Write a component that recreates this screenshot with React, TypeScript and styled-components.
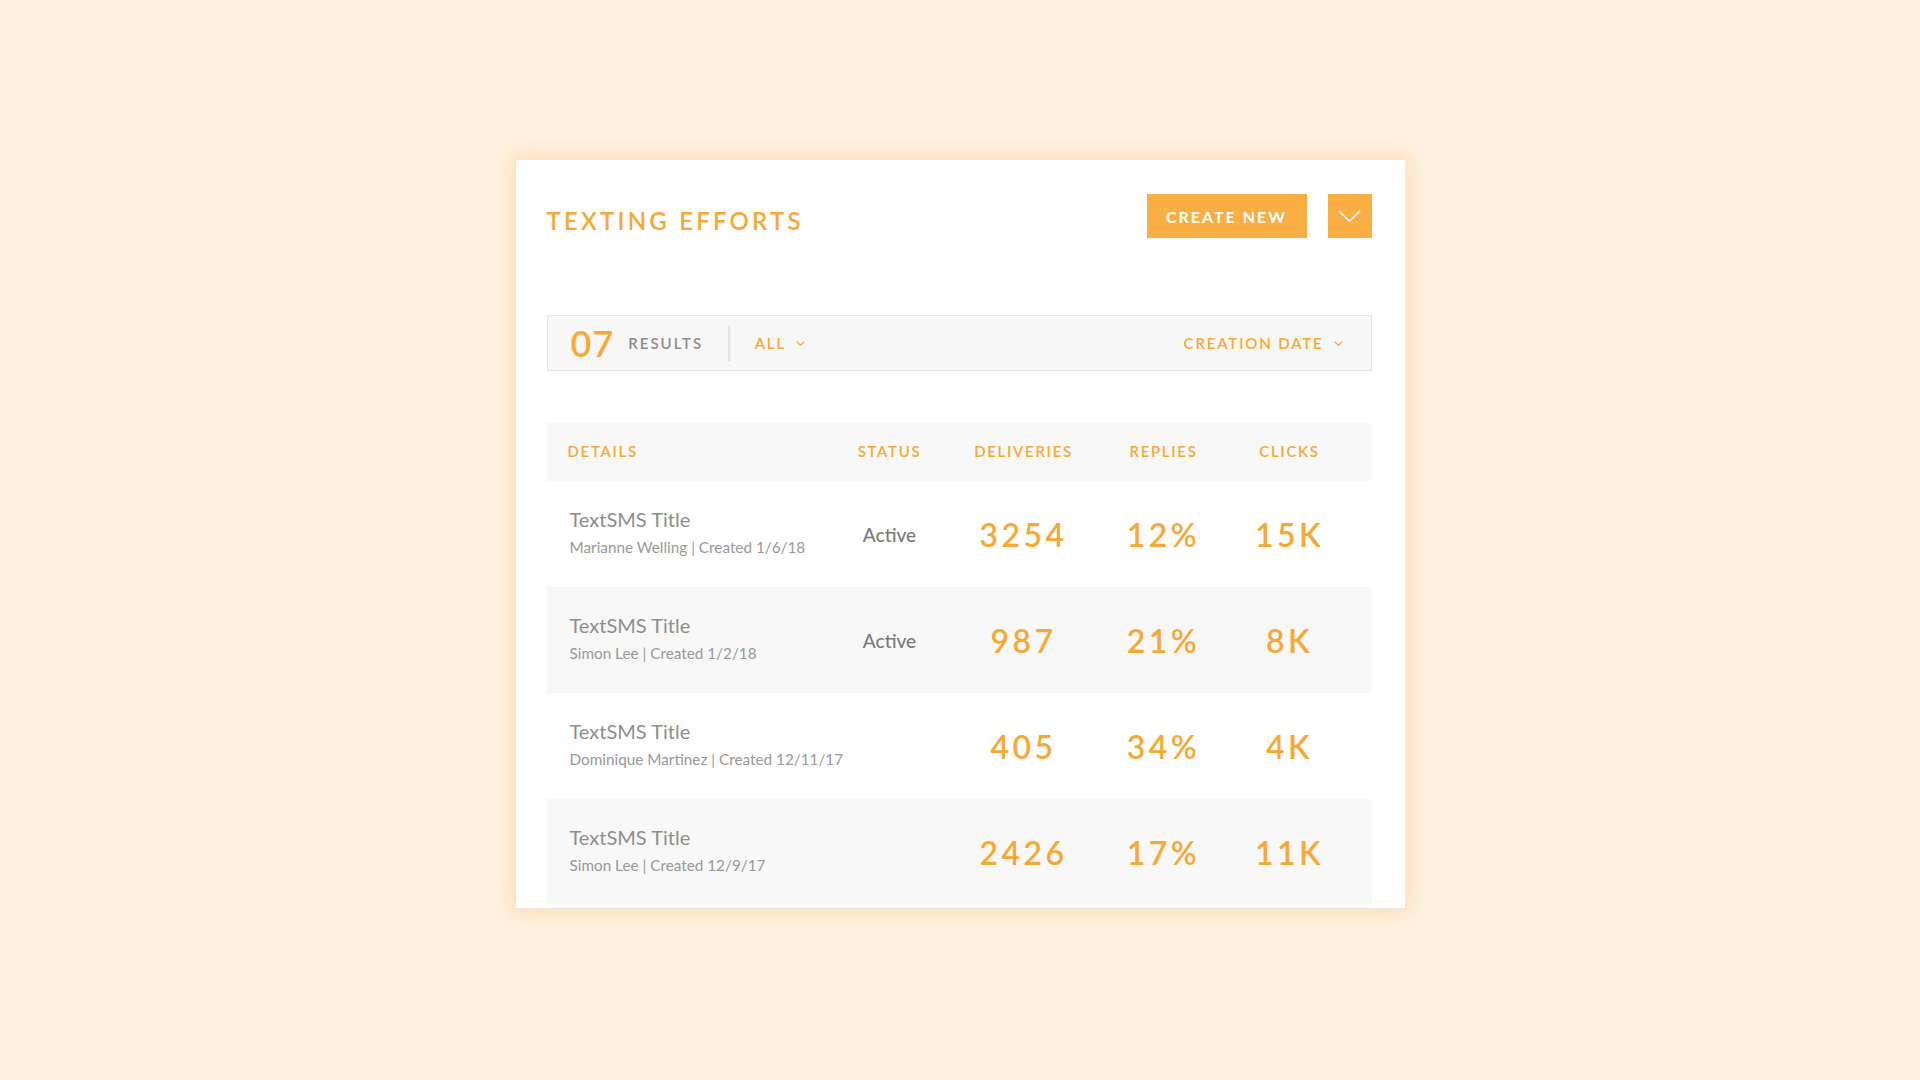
import styled, { createGlobalStyle } from 'styled-components';

const GlobalStyle = createGlobalStyle`
    html, body {
        margin: 0;
        padding: 0;
        background: #fff2e2;
        font-family: 'Lato', 'Noto Sans', sans-serif;
    }
`

const orange = '#f8a835';
const cols = '294px 98px 170px 110px 142px';

const Page = styled.div`
    min-height: 1080px;
    display: flex;
    justify-content: center;
    align-items: flex-start;
    padding-top: 159px;
    box-sizing: border-box;
`

const Card = styled.div`
    width: 891px;
    box-sizing: border-box;
    background: #fff;
    border: 1px solid #ebe6df;
    box-shadow: 0 0 18px 5px rgba(252, 205, 140, 0.5);
    padding: 34px 33px 3px 31px;
`

const Header = styled.div`
    display: flex;
    align-items: center;
    justify-content: space-between;
    height: 44px;
`

const Title = styled.h1`
    margin: 10px 0 0;
    font-size: 24px;
    font-weight: 600;
    letter-spacing: 3.2px;
    color: ${orange};
    line-height: 1;
`

const Actions = styled.div`
    display: flex;
    gap: 21px;
`

const Button = styled.button<{ $square?: boolean }>`
    height: 44px;
    width: ${p => p.$square ? '44px' : '160px'};
    border: none;
    background: #faae44;
    color: #fff;
    font-family: inherit;
    font-size: 16px;
    font-weight: 700;
    letter-spacing: 2px;
    display: flex;
    align-items: center;
    justify-content: center;
    padding: 0;
    cursor: pointer;
`

const FilterBar = styled.div`
    margin-top: 77px;
    height: 56px;
    box-sizing: border-box;
    border: 1.5px solid #e4e4e4;
    background: #f7f7f7;
    display: flex;
    align-items: center;
    padding: 0 28px 0 23px;
`

const Count = styled.span`
    font-size: 36px;
    font-weight: 600;
    color: ${orange};
    letter-spacing: 1px;
    line-height: 1;
`

const BarLabel = styled.span<{ $accent?: boolean }>`
    font-size: 15px;
    font-weight: 600;
    letter-spacing: 1.85px;
    color: ${p => p.$accent ? orange : '#8d8d8d'};
    display: flex;
    align-items: center;
    gap: 10px;
`

const Results = styled(BarLabel)`
    margin-left: 14px;
    letter-spacing: 2px;
`

const Divider = styled.div`
    width: 1.5px;
    height: 35px;
    background: #e2e2e2;
    margin: 0 25px;
`

const Spacer = styled.div`
    flex: 1;
`

const Table = styled.div`
    margin-top: 52px;
`

const Row = styled.div<{ $shade?: boolean; $head?: boolean }>`
    display: grid;
    grid-template-columns: ${cols};
    align-items: center;
    height: ${p => p.$head ? '58px' : '106px'};
    background: ${p => p.$shade ? '#f8f8f8' : '#fff'};
`

const HeadCell = styled.div<{ $left?: boolean }>`
    font-size: 15px;
    font-weight: 600;
    letter-spacing: 1.7px;
    color: ${orange};
    text-align: ${p => p.$left ? 'left' : 'center'};
    padding-left: ${p => p.$left ? '21px' : '0'};
    margin-top: -2px;
`

const Details = styled.div`
    padding-left: 23px;
    margin-top: -6px;
    white-space: nowrap;
    min-width: 0;
`

const RowTitle = styled.div`
    font-size: 20px;
    line-height: 28px;
    color: #8e8e8e;
`

const RowSub = styled.div`
    font-size: 15.3px;
    line-height: 20px;
    margin-top: 4px;
    color: #999;
`

const Status = styled.div`
    text-align: center;
    font-size: 19px;
    font-weight: 500;
    color: #7a7a7a;
`

const Stat = styled.div`
    text-align: center;
    font-size: 32px;
    font-weight: 600;
    letter-spacing: 3.5px;
    color: ${orange};
    margin-top: 1px;
`

const Chevron = ({ w, h, color, sw }: { w: number; h: number; color: string; sw: number }) => (
    <svg width={w} height={h} viewBox={`0 0 ${w} ${h}`} fill="none">
        <polyline points={`0.8,0.8 ${w / 2},${h - 0.8} ${w - 0.8},0.8`} stroke={color} strokeWidth={sw} />
    </svg>
)

const rows = [
    { who: 'Marianne Welling | Created 1/6/18', status: 'Active', del: '3254', rep: '12%', clicks: '15K' },
    { who: 'Simon Lee | Created 1/2/18', status: 'Active', del: '987', rep: '21%', clicks: '8K' },
    { who: 'Dominique Martinez | Created 12/11/17', status: '', del: '405', rep: '34%', clicks: '4K' },
    { who: 'Simon Lee | Created 12/9/17', status: '', del: '2426', rep: '17%', clicks: '11K' },
];

const App = () => {
    return (
        <Page>
            <GlobalStyle />
            <Card>
                <Header>
                    <Title>TEXTING EFFORTS</Title>
                    <Actions>
                        <Button>CREATE NEW</Button>
                        <Button $square><Chevron w={23} h={12} color="#fff" sw={1.4} /></Button>
                    </Actions>
                </Header>

                <FilterBar>
                    <Count>07</Count>
                    <Results>RESULTS</Results>
                    <Divider />
                    <BarLabel $accent>ALL <Chevron w={9} h={5} color={orange} sw={1.2} /></BarLabel>
                    <Spacer />
                    <BarLabel $accent>CREATION DATE <Chevron w={9} h={5} color={orange} sw={1.2} /></BarLabel>
                </FilterBar>

                <Table>
                    <Row $head $shade>
                        <HeadCell $left>DETAILS</HeadCell>
                        <HeadCell>STATUS</HeadCell>
                        <HeadCell>DELIVERIES</HeadCell>
                        <HeadCell>REPLIES</HeadCell>
                        <HeadCell>CLICKS</HeadCell>
                    </Row>
                    {rows.map((r, i) => (
                        <Row key={i} $shade={i % 2 === 1}>
                            <Details>
                                <RowTitle>TextSMS Title</RowTitle>
                                <RowSub>{r.who}</RowSub>
                            </Details>
                            <Status>{r.status}</Status>
                            <Stat>{r.del}</Stat>
                            <Stat>{r.rep}</Stat>
                            <Stat>{r.clicks}</Stat>
                        </Row>
                    ))}
                </Table>
            </Card>
        </Page>
    )
}

export default App
